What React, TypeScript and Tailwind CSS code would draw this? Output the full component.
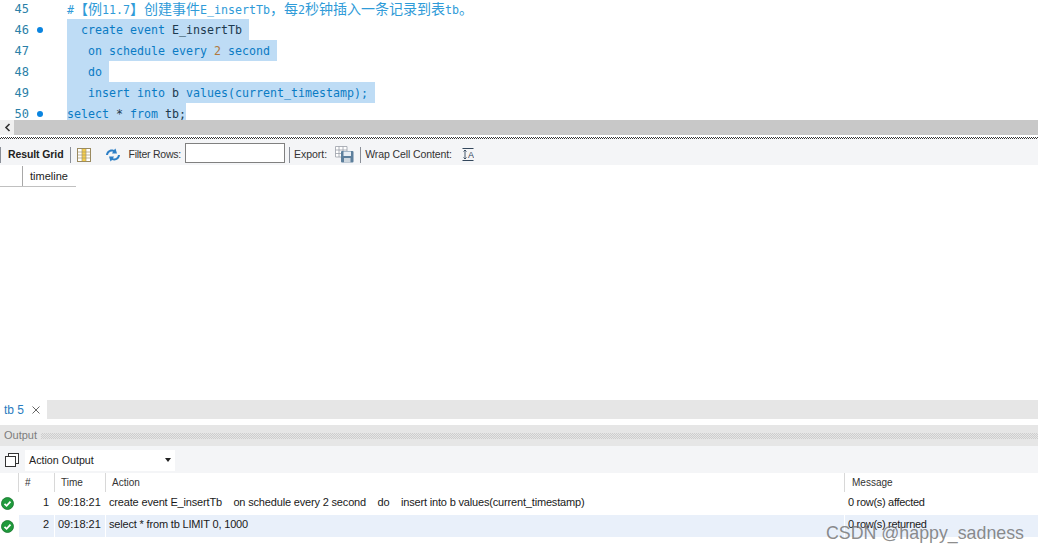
import React from 'react';

const kw = 'text-[#0a7bc4]';
const ui = { fontFamily: '"Liberation Sans", "Noto Sans CJK SC", sans-serif' };
const mono = { fontFamily: '"DejaVu Sans Mono", "Noto Sans CJK SC", monospace' };

const Dot = () => <span className="block w-[6px] h-[6px] rounded-full bg-[#0a84e0]" />;

const CodeLine: React.FC<{ num: number; dot?: boolean; children: React.ReactNode }> = ({ num, dot, children }) => (
  <div className="flex h-[21px] items-stretch leading-[22px]">
    <span className="w-[29px] text-right text-[#2b7fa8] text-[12px]">{num}</span>
    <span className="w-[38px] flex items-center pl-[8px]">{dot && <Dot />}</span>
    <span className="whitespace-pre">{children}</span>
  </div>
);

const Cjk: React.FC<{ children: React.ReactNode }> = ({ children }) => <span className="text-[14px]">{children}</span>;

const Check = () => (
  <svg width="13" height="13" viewBox="0 0 13 13">
    <circle cx="6.5" cy="6.5" r="6" fill="#1f9a3c" stroke="#14722a" strokeWidth="0.8" />
    <path d="M3.5 6.8 L5.6 8.8 L9.5 4.6" fill="none" stroke="#fff" strokeWidth="1.8" />
  </svg>
);

const Sep = () => <span className="block w-px h-[16px] bg-[#8a8f98]" />;

const ResultRow: React.FC<{ n: number; action: string; msg: string; alt?: boolean; height: string }> = ({ n, action, msg, alt, height }) => (
  <div className={`flex items-center text-[11px] text-[#1a1a1a] ${height} ${alt ? 'bg-[#e9f0fa]' : 'bg-white'}`}>
    <span className="w-[19px] pl-[1px] flex items-center h-full bg-white"><Check /></span>
    <span className="w-[36px] h-full flex items-center justify-end pr-[5px] pb-[3px] border-r border-white">{n}</span>
    <span className="w-[51px] h-full flex items-center pl-[3px] pb-[3px] border-r border-white">09:18:21</span>
    <span className="w-[739px] h-full flex items-center pl-[3px] pb-[3px] whitespace-pre tracking-[-0.17px] border-r border-white">{action}</span>
    <span className="pl-[3px] pb-[3px] h-full flex items-center tracking-[-0.3px]">{msg}</span>
  </div>
);

const App: React.FC = () => (
  <div className="w-[1038px] h-[551px] bg-white overflow-hidden flex flex-col" style={ui}>
    {/* Editor */}
    <div className={`h-[120px] overflow-hidden text-[11.63px] ${kw}`} style={mono}>
      <div className="-mt-[2px]">
        <CodeLine num={45}>
          <span className="text-[#2f9bd8]">#<Cjk>【例</Cjk>11.7<Cjk>】创建事件</Cjk>E_insertTb<Cjk>，每</Cjk>2<Cjk>秒钟插入一条记录到表</Cjk>tb<Cjk>。</Cjk></span>
        </CodeLine>
        <CodeLine num={46} dot>
          <span className="bg-[#bedcf5] inline-block h-[21px]">{'  create event '}<span className="text-[#1c3a4f]">E_insertTb</span>{' '}</span>
        </CodeLine>
        <CodeLine num={47}>
          <span className="bg-[#bedcf5] inline-block h-[21px]">{'   on schedule every '}<span className="text-[#b0793c]">2</span>{' second '}</span>
        </CodeLine>
        <CodeLine num={48}>
          <span className="bg-[#bedcf5] inline-block h-[21px]">{'   do '}</span>
        </CodeLine>
        <CodeLine num={49}>
          <span className="bg-[#bedcf5] inline-block h-[21px]">{'   insert into '}<span className="text-[#1c3a4f]">b</span>{' values(current_timestamp); '}</span>
        </CodeLine>
        <CodeLine num={50} dot>
          <span className="bg-[#bedcf5] inline-block h-[21px]">select <span className="text-[#1c3a4f]">*</span> from <span className="text-[#1c3a4f]">tb;</span></span>
        </CodeLine>
      </div>
    </div>

    {/* Horizontal scrollbar */}
    <div className="h-[15px] bg-[#c8c8c8] flex">
      <div className="w-[14px] bg-[#f0f0f0] flex items-center justify-center">
        <svg width="7" height="9" viewBox="0 0 7 9"><path d="M5.5 1 L2 4.5 L5.5 8" fill="none" stroke="#333" strokeWidth="1.6" /></svg>
      </div>
    </div>
    <div className="h-[4px] pt-[2px]">
      <div className="h-[2px] bg-[repeating-conic-gradient(#333_0_25%,transparent_0_50%)] bg-[length:2px_2px]" />
    </div>

    {/* Result toolbar */}
    <div className="h-[26px] pt-[5px] bg-[#f4f5f7] flex items-center text-[10.5px] text-[#333]">
      <Sep />
      <span className="ml-[7px] font-bold text-[#222] tracking-[-0.1px]">Result Grid</span>
      <span className="ml-[6px]"><Sep /></span>
      <svg className="ml-[6px]" width="14" height="14" viewBox="0 0 14 14">
        <rect x="0.5" y="0.5" width="13" height="13" fill="#fff" stroke="#9a8a60" />
        <rect x="5" y="1" width="4" height="12" fill="#f7cf4a" />
        <path d="M5 1V13M9 1V13M1 4H13M1 7H13M1 10H13" stroke="#a89a70" strokeWidth="0.7" />
      </svg>
      <svg className="ml-[14px]" width="16" height="14" viewBox="0 0 16 14">
        <path d="M1 7 C1.5 3 5 0.5 9 2 L10.5 0.5 L12 5.5 L7 5.5 L8 3.8 C5.5 3 3.5 4.5 3 7 Z" fill="#2d7fc6" />
        <path d="M15 7 C14.5 11 11 13.5 7 12 L5.5 13.5 L4 8.5 L9 8.5 L8 10.2 C10.5 11 12.5 9.5 13 7 Z" fill="#2d7fc6" />
      </svg>
      <span className="ml-[8px] tracking-[-0.25px]">Filter Rows:</span>
      <span className="ml-[4px] -mt-[3px] w-[100px] h-[20px] bg-white border border-[#808080]" />
      <span className="ml-[4px]"><Sep /></span>
      <span className="ml-[4px]">Export:</span>
      <svg className="ml-[8px]" width="19" height="17" viewBox="0 0 19 17">
        <path d="M0.5 0.5H12V11H0.5ZM0.5 4H12M0.5 7.5H12M4 0.5V11M8 0.5V11" fill="#fff" stroke="#9aa0a8" strokeWidth="0.8" />
        <rect x="6" y="5" width="12.5" height="11.5" rx="1" fill="#5d7f9c" />
        <rect x="8.5" y="5.5" width="7.5" height="4.5" fill="#e8eef4" />
        <rect x="9" y="12" width="6.5" height="4.5" fill="#cfd8e0" />
      </svg>
      <span className="ml-[6px]"><Sep /></span>
      <span className="ml-[4px] tracking-[-0.1px]">Wrap Cell Content:</span>
      <svg className="ml-[10px]" width="12" height="13" viewBox="0 0 12 13">
        <path d="M0.5 0.5H11.5M0.5 12.5H11.5" stroke="#33475c" />
        <path d="M3 2V11M1.5 3.5L3 2L4.5 3.5M1.5 9.5L3 11L4.5 9.5" fill="none" stroke="#33475c" strokeWidth="0.9" />
        <text x="6" y="10" fontSize="9" fill="#33475c" style={ui}>A</text>
      </svg>
    </div>

    {/* Grid header and empty result area */}
    <div className="h-[235px] flex items-start">
      <div className="flex h-[21px] border-b border-[#c0c0c0] mt-px text-[11px] text-[#222]">
        <span className="w-[23px] border-r border-[#a8a8a8]" />
        <span className="w-[53px] pl-[7px] leading-[20px]">timeline</span>
      </div>
    </div>

    {/* Result tabs */}
    <div className="h-[19px] bg-[#e6e6e6] flex">
      <div className="w-[47px] bg-white flex items-center text-[12px] text-[#2a7cc0] pl-[4px]">
        tb 5
        <svg className="ml-[8px]" width="8" height="8" viewBox="0 0 8 8"><path d="M0.5 0.5L7.5 7.5M7.5 0.5L0.5 7.5" stroke="#666" /></svg>
      </div>
    </div>

    <div className="h-[6px]" />

    {/* Output header */}
    <div className="h-[21px] bg-[#e6e6e6] flex items-center text-[11px] text-[#7d7d7d] pl-[4px]">
      Output
      <span className="ml-[4px] flex-1 h-[6px] bg-[repeating-conic-gradient(#cdcdcd_0_25%,transparent_0_50%)] bg-[length:2px_2px]" />
    </div>

    {/* Action bar */}
    <div className="h-[27px] pt-[1px] bg-[#f4f5f7] flex items-center">
      <svg className="ml-[5px]" width="14" height="14" viewBox="0 0 14 14" fill="#fff" stroke="#333">
        <rect x="3.5" y="0.5" width="10" height="10" />
        <rect x="0.5" y="3.5" width="10" height="10" />
      </svg>
      <div className="ml-[6px] w-[150px] h-[21px] bg-white flex items-center text-[10.7px] text-[#222] pl-[4px] relative">
        Action Output
        <span className="absolute right-[4px] top-[8px] border-x-[3.5px] border-x-transparent border-t-[4px] border-t-[#222]" />
      </div>
    </div>

    {/* Output table */}
    <div className="h-[19px] flex items-center text-[10px] text-[#333]">
      <span className="w-[19px] h-full border-r border-[#d8d8d8]" />
      <span className="w-[36px] h-full border-r border-[#d8d8d8] pl-[6px] leading-[19px]">#</span>
      <span className="w-[51px] h-full border-r border-[#d8d8d8] pl-[6px] leading-[19px]">Time</span>
      <span className="w-[739px] h-full border-r border-[#d8d8d8] pl-[6px] leading-[19px]">Action</span>
      <span className="pl-[7px]">Message</span>
    </div>
    <ResultRow height="h-[23px]" n={1} action="create event E_insertTb    on schedule every 2 second    do    insert into b values(current_timestamp)" msg="0 row(s) affected" />
    <ResultRow height="h-[22px]" n={2} action="select * from tb LIMIT 0, 1000" msg="0 row(s) returned" alt />

    {/* Watermark */}
    <div className="absolute left-[826px] top-[523px] text-[17.8px] text-[#6e6e6e]/80 leading-[20px]">
      CSDN @happy_sadness
    </div>
  </div>
);

export default App;
